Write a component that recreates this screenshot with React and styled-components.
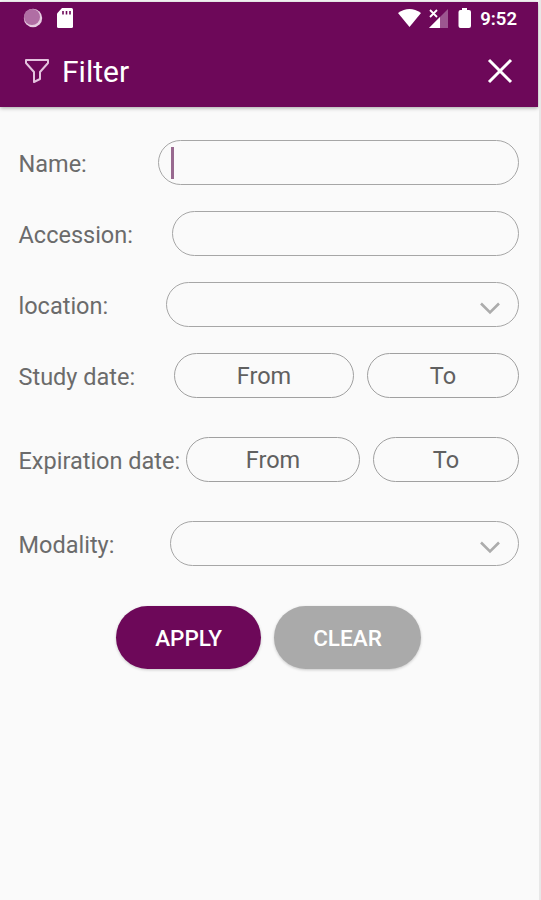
import React from 'react';
import styled, { createGlobalStyle } from 'styled-components';

const GlobalStyle = createGlobalStyle`
  *, *::before, *::after {
    box-sizing: border-box;
  }
  body {
    margin: 0;
    background: #fafafa;
    font-family: Roboto, 'Liberation Sans', sans-serif;
  }
`;

const StyledWrapper = styled.div`
  width: 541px;
  height: 900px;
  padding-top: 2px;
  overflow: hidden;
  background: #fafafa;
  border-right: 2px solid #e8e8e8;
`;

const StyledHeader = styled.header`
  width: 538px;
  height: 105px;
  color: white;
  background: #6d0859;
  box-shadow: 0 1px 4px rgba(0, 0, 0, 0.35);
`;

const StyledStatusBar = styled.div`
  height: 32px;
  padding: 0 21px 0 23px;
  display: flex;
  align-items: center;
  justify-content: space-between;
`;

const StyledClock = styled.span`
  padding-top: 2px;
  font-size: 18.5px;
  font-weight: 600;
  line-height: 30px;
`;

const StyledStatusIcons = styled.div`
  display: flex;
  align-items: center;
`;

const StyledToolbar = styled.div`
  height: 73px;
  padding: 0 25px 0 24px;
  display: flex;
  align-items: center;
`;

const StyledTitle = styled.h1`
  flex: 1;
  margin: 0 0 0 12px;
  padding-top: 2px;
  font-size: 30px;
  font-weight: 400;
  line-height: 72px;
`;

const StyledIconButton = styled.button`
  display: flex;
  padding: 0;
  border: 0;
  color: inherit;
  background: none;
`;

const StyledForm = styled.form`
  padding: 33px 20px 0 18px;
`;

const StyledRow = styled.div`
  display: flex;
  align-items: center;
  height: 45px;
  margin-bottom: ${({ $gap }) => $gap}px;
`;

const StyledLabel = styled.label`
  flex: none;
  width: ${({ $width }) => $width}px;
  padding: 3px 0 0 0.5px;
  color: #6b6b6b;
  font-size: 23.5px;
  line-height: 45px;
  white-space: nowrap;
`;

const StyledField = styled.div`
  flex: 1;
  height: 45px;
  padding: 0 18px 0 12px;
  display: flex;
  align-items: center;
  border: 1px solid #a6a6a6;
  border-radius: 23px;
`;

const StyledCursor = styled.span`
  width: 3px;
  height: 32px;
  background: #98698f;
`;

const StyledChevron = styled.svg`
  margin: 8px 0 0 auto;
`;

const StyledDateButton = styled.button`
  flex: none;
  width: ${({ $width }) => $width}px;
  height: 45px;
  padding: 2px 0 0;
  border: 1px solid #a0a0a0;
  border-radius: 23px;
  color: #606060;
  background: none;
  font-family: inherit;
  font-size: 23.5px;
  line-height: 41px;

  & + & {
    margin-left: 13px;
  }
`;

const StyledButtonArea = styled.div`
  display: flex;
  gap: 13px;
  padding: 0.5px 0 0 98px;
`;

const StyledButton = styled.button`
  width: ${({ $width }) => $width}px;
  height: 63px;
  padding: 0;
  border: 0;
  border-radius: 32px;
  color: white;
  background: ${({ $secondary }) => ($secondary ? '#aaaaaa' : '#6d0859')};
  box-shadow: 0 1px 3px rgba(0, 0, 0, 0.2);
  font-family: inherit;
  font-size: 22.5px;
  font-weight: 500;
  line-height: 64px;
`;

const Chevron = () => (
  <StyledChevron width="20" height="13" viewBox="0 0 20 13">
    <path d="M1 1.5 10 10.5 19 1.5" fill="none" stroke="#acacac" strokeWidth="2.6" />
  </StyledChevron>
);

const SystemIcons = () => (
  <svg width="52" height="24" viewBox="0 0 52 24">
    <circle cx="10" cy="12" r="9.2" fill="#e6cce1" />
    <circle cx="9" cy="11" r="8" fill="#b06ea4" />
    <path
      d="M39 2h9.500q1.500 0 1.500 1.500v17q0 1.500-1.500 1.500H35.500q-1.500 0-1.500-1.500V7.500z"
      fill="white"
    />
    <path d="M40 5v3.500M43.500 5v3.500M47 5v3.500" stroke="#6d0859" strokeWidth="1.6" />
  </svg>
);

const SignalIcons = () => (
  <svg width="82" height="24" viewBox="0 0 82 24">
    <path d="M0 7Q11.500-1 23 7L11.500 21z" fill="white" />
    <path d="M50 3v19H31z" fill="#9c5690" />
    <path d="M42 11v11H31z" fill="white" />
    <path d="m32 4 7 7m0-7-7 7" stroke="white" strokeWidth="1.8" />
    <path
      d="M64 2h5v2h2q2 0 2 2v14q0 2-2 2h-8.500q-2 0-2-2V6q0-2 2-2H64z"
      fill="white"
    />
  </svg>
);

const FilterIcon = () => (
  <svg width="26" height="26" viewBox="0 0 26 26">
    <path
      d="M2 2h22v3l-8 9v7l-6 3V14L2 5z"
      fill="none"
      stroke="#e3c3de"
      strokeWidth="2"
      strokeLinejoin="round"
    />
  </svg>
);

const CloseIcon = () => (
  <svg width="26" height="26" viewBox="0 0 26 26">
    <path d="m2 2 22 22m0-22L2 24" stroke="white" strokeWidth="3" />
  </svg>
);

const App = () => (
  <>
    <GlobalStyle />
    <StyledWrapper>
      <StyledHeader>
        <StyledStatusBar>
          <SystemIcons />
          <StyledStatusIcons>
            <SignalIcons />
            <StyledClock>9:52</StyledClock>
          </StyledStatusIcons>
        </StyledStatusBar>
        <StyledToolbar>
          <FilterIcon />
          <StyledTitle>Filter</StyledTitle>
          <StyledIconButton aria-label="Close">
            <CloseIcon />
          </StyledIconButton>
        </StyledToolbar>
      </StyledHeader>
      <StyledForm>
        <StyledRow $gap={26}>
          <StyledLabel $width={140}>Name:</StyledLabel>
          <StyledField>
            <StyledCursor />
          </StyledField>
        </StyledRow>
        <StyledRow $gap={26}>
          <StyledLabel $width={154}>Accession:</StyledLabel>
          <StyledField />
        </StyledRow>
        <StyledRow $gap={26}>
          <StyledLabel $width={148}>location:</StyledLabel>
          <StyledField>
            <Chevron />
          </StyledField>
        </StyledRow>
        <StyledRow $gap={39}>
          <StyledLabel $width={156}>Study date:</StyledLabel>
          <StyledDateButton type="button" $width={180}>
            From
          </StyledDateButton>
          <StyledDateButton type="button" $width={152}>
            To
          </StyledDateButton>
        </StyledRow>
        <StyledRow $gap={39}>
          <StyledLabel $width={168}>Expiration date:</StyledLabel>
          <StyledDateButton type="button" $width={174}>
            From
          </StyledDateButton>
          <StyledDateButton type="button" $width={146}>
            To
          </StyledDateButton>
        </StyledRow>
        <StyledRow $gap={39}>
          <StyledLabel $width={152}>Modality:</StyledLabel>
          <StyledField>
            <Chevron />
          </StyledField>
        </StyledRow>
        <StyledButtonArea>
          <StyledButton type="button" $width={145}>
            APPLY
          </StyledButton>
          <StyledButton type="button" $secondary $width={147}>
            CLEAR
          </StyledButton>
        </StyledButtonArea>
      </StyledForm>
    </StyledWrapper>
  </>
);

export default App;
